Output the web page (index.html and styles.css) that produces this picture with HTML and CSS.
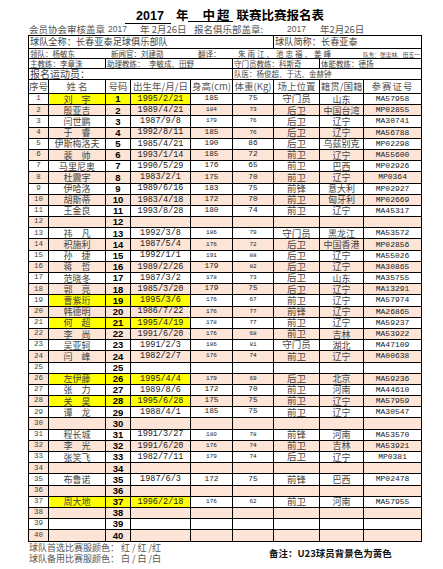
FILE: index.html
```html
<!DOCTYPE html>
<html lang="zh-CN">
<head>
<meta charset="utf-8">
<title>2017年中超联赛比赛报名表</title>
<link rel="stylesheet" href="styles.css">
</head>
<body>
<div class="page">
  <div class="title"><span class="u u1"><span class="num">2017</span></span>年<span class="u u2">中超</span>联赛比赛报名表</div>
  <div class="dateline">
    <span class="d1">会员协会审核盖章</span><span class="d2 num">2017</span><span class="d3">年 2月26日</span><span class="d4">报名俱乐部盖章:</span><span class="d5 num">2017</span><span class="d6">年2月26日</span>
  </div>
  <table class="sheet">
    <colgroup>
      <col class="c1"><col class="c2"><col class="c3"><col class="c4"><col class="c5"><col class="c6"><col class="c7"><col class="c8"><col class="c9">
    </colgroup>
    <tbody class="info">
      <tr class="ra"><td colspan="6">球队全称：长春亚泰足球俱乐部队</td><td colspan="3">球队简称：长春亚泰</td></tr>
      <tr class="rb"><td colspan="9"><span class="b1">领队：杨敏东</span><span class="b2">新闻官：刘建勋</span><span class="b3">翻译：</span><span class="b4">朱雨江、池忠福、姜峰</span><span class="b5">队务：张忠林、田五一</span></td></tr>
      <tr class="rc"><td colspan="2">主教练：李章洙</td><td colspan="3"><span class="c-l">助理教练：</span>李敏成、田野</td><td colspan="2">守门员教练：科斯奇</td><td colspan="2">体能教练：德扬</td></tr>
      <tr class="rd"><td colspan="5" class="big">报名运动员：</td><td colspan="4">队医：杨俊超、于达、金赫钟</td></tr>
      <tr class="head"><td>序号</td><td>姓 名</td><td>号码</td><td>出生年/月/日</td><td>身高(cm)</td><td>体重(Kg)</td><td>场上位置</td><td>籍贯/国籍</td><td class="sp">参赛证号</td></tr>
    </tbody>
    <tbody class="data">
      <tr><td>1</td><td class="y">刘　宇</td><td class="y">1</td><td class="y">1995/2/21</td><td>185</td><td>75</td><td>守门员</td><td>山东</td><td>MA57958</td></tr>
      <tr class="e"><td>2</td><td>殷亚吉</td><td>2</td><td>1989/4/21</td><td class="s">184</td><td class="s">73</td><td>后卫</td><td>中国台湾</td><td>MP02855</td></tr>
      <tr><td>3</td><td>闫世鹏</td><td>3</td><td>1987/9/8</td><td class="s">179</td><td class="s">76</td><td>后卫</td><td>辽宁</td><td>MA30741</td></tr>
      <tr class="e"><td>4</td><td>于　睿</td><td>4</td><td>1992/8/11</td><td>185</td><td class="s">76</td><td>后卫</td><td>辽宁</td><td>MA56788</td></tr>
      <tr><td>5</td><td>伊斯梅洛夫</td><td>5</td><td>1985/4/21</td><td>190</td><td>86</td><td>后卫</td><td>乌兹别克</td><td>MP02298</td></tr>
      <tr class="e"><td>6</td><td>裴　帅</td><td>6</td><td>1993/1/14</td><td>185</td><td>72</td><td>前卫</td><td>辽宁</td><td>MA55600</td></tr>
      <tr><td>7</td><td>马里尼奥</td><td>7</td><td>1990/5/29</td><td>176</td><td>65</td><td>前卫</td><td>巴西</td><td>MP02926</td></tr>
      <tr class="e"><td>8</td><td>杜震宇</td><td>8</td><td>1983/2/1</td><td>175</td><td>70</td><td>前卫</td><td>辽宁</td><td>MP0364</td></tr>
      <tr><td>9</td><td>伊哈洛</td><td>9</td><td>1989/6/16</td><td>183</td><td>75</td><td>前锋</td><td>意大利</td><td>MP02927</td></tr>
      <tr class="e"><td>10</td><td>胡斯蒂</td><td>10</td><td>1983/4/18</td><td>172</td><td>70</td><td>前卫</td><td>匈牙利</td><td>MP02669</td></tr>
      <tr><td>11</td><td>王金良</td><td>11</td><td>1993/8/28</td><td>180</td><td>74</td><td>前卫</td><td>辽宁</td><td>MA45317</td></tr>
      <tr class="e"><td>12</td><td></td><td>12</td><td></td><td></td><td></td><td></td><td></td><td></td></tr>
      <tr><td>13</td><td>祎　凡</td><td>13</td><td>1992/3/8</td><td class="s">186</td><td class="s">79</td><td>守门员</td><td>黑龙江</td><td>MA53572</td></tr>
      <tr class="e"><td>14</td><td>积施利</td><td>14</td><td>1987/5/4</td><td class="s">176</td><td class="s">72</td><td>后卫</td><td>中国香港</td><td>MP02856</td></tr>
      <tr><td>15</td><td>孙　捷</td><td>15</td><td>1992/1/1</td><td class="s">191</td><td class="s">88</td><td>后卫</td><td>辽宁</td><td>MA55026</td></tr>
      <tr class="e"><td>16</td><td>蒋　哲</td><td>16</td><td>1989/2/26</td><td>179</td><td class="s">82</td><td>后卫</td><td>辽宁</td><td>MA30865</td></tr>
      <tr><td>17</td><td>范晓冬</td><td>17</td><td>1987/3/2</td><td class="s">178</td><td class="s">73</td><td>后卫</td><td>山东</td><td>MA35755</td></tr>
      <tr class="e"><td>18</td><td>郭　亮</td><td>18</td><td>1985/3/20</td><td>179</td><td>75</td><td>后卫</td><td>辽宁</td><td>MA13291</td></tr>
      <tr><td>19</td><td class="y">曹紫珩</td><td class="y">19</td><td class="y">1995/3/6</td><td class="s">176</td><td class="s">67</td><td>前卫</td><td>辽宁</td><td>MA57974</td></tr>
      <tr class="e"><td>20</td><td>韩德明</td><td>20</td><td>1986/7/22</td><td class="s">176</td><td class="s">77</td><td>前锋</td><td>辽宁</td><td>MA26865</td></tr>
      <tr><td>21</td><td class="y">何　超</td><td class="y">21</td><td class="y">1995/4/19</td><td class="s">178</td><td class="s">77</td><td>前卫</td><td>辽宁</td><td>MA59237</td></tr>
      <tr class="e"><td>22</td><td>李　尚</td><td>22</td><td>1991/6/20</td><td class="s">176</td><td class="s">68</td><td>前卫</td><td>吉林</td><td>MA53922</td></tr>
      <tr><td>23</td><td>吴亚轲</td><td>23</td><td>1991/2/3</td><td class="s">186</td><td class="s">81</td><td>守门员</td><td>湖北</td><td>MA47109</td></tr>
      <tr class="e"><td>24</td><td>闫　峰</td><td>24</td><td>1982/2/7</td><td class="s">176</td><td class="s">74</td><td>前卫</td><td>辽宁</td><td>MA00638</td></tr>
      <tr><td>25</td><td></td><td>25</td><td></td><td></td><td></td><td></td><td></td><td></td></tr>
      <tr class="e"><td>26</td><td class="y">左伊藤</td><td class="y">26</td><td class="y">1995/4/4</td><td class="s">179</td><td class="s">69</td><td>后卫</td><td>北京</td><td>MA59236</td></tr>
      <tr><td>27</td><td>张　力</td><td>27</td><td>1989/8/6</td><td>172</td><td>70</td><td>前卫</td><td>河南</td><td>MA44610</td></tr>
      <tr class="e"><td>28</td><td class="y">关　昊</td><td class="y">28</td><td class="y">1995/6/28</td><td>175</td><td>75</td><td>前卫</td><td>辽宁</td><td>MA57959</td></tr>
      <tr><td>29</td><td>谭　龙</td><td>29</td><td>1988/4/1</td><td>185</td><td>75</td><td>前卫</td><td>辽宁</td><td>MA30547</td></tr>
      <tr class="e"><td>30</td><td></td><td>30</td><td></td><td></td><td></td><td></td><td></td><td></td></tr>
      <tr><td>31</td><td>程长城</td><td>31</td><td>1991/3/27</td><td class="s">180</td><td class="s">78</td><td>前锋</td><td>河南</td><td>MA53570</td></tr>
      <tr class="e"><td>32</td><td>李　光</td><td>32</td><td>1991/6/20</td><td class="s">176</td><td class="s">74</td><td>前卫</td><td>吉林</td><td>MA53921</td></tr>
      <tr><td>33</td><td>张笑飞</td><td>33</td><td>1982/7/11</td><td class="s">179</td><td class="s">74</td><td>后卫</td><td>辽宁</td><td>MP0381</td></tr>
      <tr class="e"><td>34</td><td></td><td>34</td><td></td><td></td><td></td><td></td><td></td><td></td></tr>
      <tr><td>35</td><td>布鲁诺</td><td>35</td><td>1987/6/3</td><td>172</td><td>75</td><td>前锋</td><td>巴西</td><td>MP02478</td></tr>
      <tr class="e"><td>36</td><td></td><td>36</td><td></td><td></td><td></td><td></td><td></td><td></td></tr>
      <tr><td>37</td><td class="y">周大地</td><td class="y">37</td><td class="y">1996/2/18</td><td class="s">176</td><td class="s">62</td><td>前卫</td><td>河南</td><td>MA57955</td></tr>
      <tr class="e"><td>38</td><td></td><td>38</td><td></td><td></td><td></td><td></td><td></td><td></td></tr>
      <tr><td>39</td><td></td><td>39</td><td></td><td></td><td></td><td></td><td></td><td></td></tr>
      <tr class="e"><td>40</td><td></td><td>40</td><td></td><td></td><td></td><td></td><td></td><td></td></tr>
    </tbody>
  </table>
  <div class="footer">
    <div class="kits">
      <div>球队首选比赛服颜色： 红 / 红 /红</div>
      <div>球队备用比赛服颜色： 白 / 白 /白</div>
    </div>
    <div class="note">备注：U23球员背景色为黄色</div>
  </div>
</div>
</body>
</html>
```

FILE: styles.css
```css
html, body {
  margin: 0;
  padding: 0;
  background: #ffffff;
}
body {
  font-family: "Noto Sans CJK SC", "Liberation Sans", sans-serif;
  color: #333333;
}
.page {
  padding: 7px 0 0 28px;
  width: 393px;
}
.num {
  font-family: "Liberation Sans", "Noto Sans CJK SC", sans-serif;
}

/* title */
.title {
  height: 16px;
  line-height: 16px;
  font-size: 12.5px;
  font-weight: bold;
  color: #000000;
  text-align: center;
  padding-left: 0;
  white-space: nowrap;
}
.u {
  display: inline-block;
  line-height: 13px;
  border-bottom: 1px solid #000000;
}
.u1 {
  padding: 0 7px 0 11px;
  margin-right: 5px;
}
.u2 {
  padding: 0 2px 0 14px;
  margin-right: 3px;
  letter-spacing: 2px;
}

/* date line */
.dateline {
  display: flex;
  height: 12px;
  line-height: 12px;
  font-size: 9.5px;
  color: #555555;
  white-space: nowrap;
  padding-left: 1px;
}
.dateline .num { font-size: 8.5px; }
.d1 { width: 79px; }
.d2 { width: 32px; }
.d3 { width: 54px; }
.d4 { width: 93px; }
.d5 { width: 33px; }

/* table */
.sheet {
  border-collapse: collapse;
  table-layout: fixed;
  width: 393px;
}
.c1 { width: 20px; }
.c2 { width: 57px; }
.c3 { width: 25px; }
.c4 { width: 60px; }
.c5 { width: 42px; }
.c6 { width: 41px; }
.c7 { width: 46px; }
.c8 { width: 44px; }
.c9 { width: 58px; }

.sheet td {
  border: 1px solid #000000;
  padding: 0;
  white-space: nowrap;
  box-sizing: border-box;
  line-height: 1;
  vertical-align: middle;
}

.info td {
  color: #444444;
  padding-left: 1px;
  font-size: 7.5px;
}
.ra td {
  height: 13px;
  font-size: 9.2px;
}
.rb td { height: 10px; }
.rc td { height: 10px; }
.rd td { height: 11px; }
.rd td.big { font-size: 10px; }

.rb span { display: inline-block; }
.b1 { width: 81px; }
.b2 { width: 87px; }
.b3 { width: 40px; }
.b4 { width: 125px; letter-spacing: 2px; }
.b5 { font-size: 5.7px; }
.c-l { display: inline-block; width: 42px; }

.head td {
  height: 14px;
  font-size: 9.5px;
  color: #555555;
  text-align: center;
  padding-left: 0;
}
.head td.sp { letter-spacing: 1px; }

/* data rows */
.data td {
  height: 11.2px;
  text-align: center;
  color: #333333;
}
.data tr.e td { background: #fce4d6; }
.data tr td.y { background: #ffff00; }

.data td:nth-child(1) {
  font-family: "Liberation Mono", monospace;
  font-size: 7.5px;
  color: #444444;
}
.data td:nth-child(2) {
  font-size: 9px;
  color: #444444;
}
.data td:nth-child(3) {
  font-family: "Liberation Sans", sans-serif;
  font-weight: bold;
  font-size: 9.5px;
  color: #000000;
}
.data td:nth-child(4) {
  font-family: "Liberation Mono", monospace;
  font-size: 8.5px;
  color: #222222;
}
.data td:nth-child(5),
.data td:nth-child(6) {
  font-family: "Liberation Mono", monospace;
  font-size: 7.8px;
  color: #222222;
}
.data td.s {
  font-size: 6px;
}
.data td:nth-child(7) {
  font-size: 9.5px;
  color: #444444;
}
.data td:nth-child(8) {
  font-size: 9px;
  color: #444444;
}
.data td:nth-child(9) {
  font-family: "Liberation Mono", monospace;
  font-size: 8px;
  color: #222222;
}

/* footer */
.footer {
  display: flex;
  align-items: center;
  padding-left: 1px;
}
.kits {
  width: 240px;
  font-size: 9px;
  line-height: 11.5px;
  color: #555555;
  white-space: nowrap;
}
.note {
  font-size: 9.5px;
  font-weight: bold;
  color: #111111;
  white-space: nowrap;
}
```
